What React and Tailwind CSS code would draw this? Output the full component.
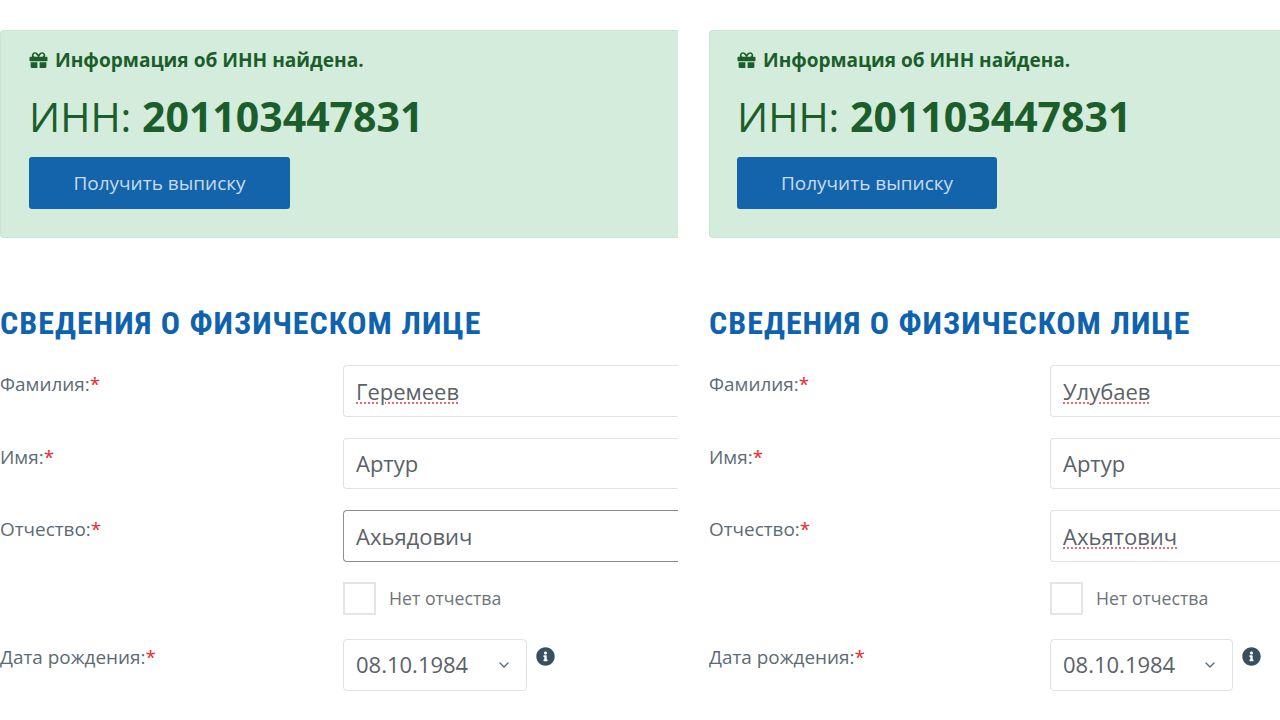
import React from "react";
import { FaGift, FaInfoCircle } from "react-icons/fa";
import { ChevronDown } from "lucide-react";

function Field({ label, value, wavy, focused, col }) {
  return (
    <div className="flex h-[51.5px] items-start">
      <div className={`${col} shrink-0 pt-[9px] text-[18.9px] leading-[20px] text-[#5b6b75]`}>
        {label}:<span className="text-[#f0262c]">*</span>
      </div>
      <div className={`flex h-[51.5px] grow items-center rounded-[4px] rounded-r-none border border-r-0 px-[12px] pt-[1px] text-[22px] text-[#5a6268] ${focused ? "border-[#8a8f92]" : "border-[#dde3e8]"}`}>
        <span className={wavy ? "underline decoration-[#f0686c] decoration-dotted decoration-2 underline-offset-[3px]" : ""}>{value}</span>
      </div>
    </div>
  );
}

function Panel({ width, surname, patronymic, wavyP, focused, col, btn, dateW, pad, title }) {
  return (
    <section className={`${width} shrink-0 overflow-hidden`}>
      <div className={`h-[208px] rounded-l-[4px] border border-r-0 border-[#c9e6d2] bg-[#d4ecdb] ${pad} pt-[17px] text-[#1b5e2b]`}>
        <div className={`flex h-[24px] items-center gap-[7px] ${title} font-bold leading-[24px]`}>
          <FaGift className="h-[18px] w-[19px]" />
          <span>Информация об ИНН найдена.</span>
        </div>
        <div className="mt-[15px] h-[58px] text-[41px] leading-[58px]">
          ИНН: <b>201103447831</b>
        </div>
        <button className={`${btn} mt-[12px] block h-[52px] rounded-[3px] bg-[#1464ab] text-[19px] text-[#c9dcef]`}>
          Получить выписку
        </button>
      </div>
      <h2 className="mt-[62px] h-[46px] text-[32px] font-bold leading-[46px] tracking-[1px] text-[#0f62ad] [font-family:'Liberation_Sans_Narrow','Roboto_Condensed',Roboto,sans-serif]">
        СВЕДЕНИЯ О ФИЗИЧЕСКОМ ЛИЦЕ
      </h2>
      <div className="mt-[19px] flex flex-col gap-[21px]">
        <Field label="Фамилия" value={surname} wavy col={col} />
        <Field label="Имя" value="Артур" col={col} />
        <Field label="Отчество" value={patronymic} wavy={wavyP} focused={focused} col={col} />
      </div>
      <div className="mt-[20px] flex h-[33px] items-center">
        <div className={`${col} shrink-0`} />
        <div className="h-[33px] w-[33px] border-2 border-[#e3e5e6] bg-white" />
        <span className="ml-[13px] text-[17.7px] text-[#6d7478]">Нет отчества</span>
      </div>
      <div className="mt-[24px] flex h-[52px] items-start">
        <div className={`${col} shrink-0 pt-[8px] text-[18.9px] leading-[20px] text-[#5b6b75]`}>
          Дата рождения:<span className="text-[#f0262c]">*</span>
        </div>
        <div className={`flex h-[52px] ${dateW} items-center justify-between rounded-[4px] border border-[#dde3e8] pl-[12px] pr-[14px] text-[22px] text-[#5a6268]`}>
          <span>08.10.1984</span>
          <ChevronDown className="h-[16px] w-[16px] text-[#5b6b75]" strokeWidth={2} />
        </div>
        <FaInfoCircle className="ml-[9px] mt-[8px] h-[19px] w-[19px] text-[#36505f]" />
      </div>
    </section>
  );
}

export default function App() {
  return (
    <div className="flex h-[720px] w-[1280px] gap-[31px] overflow-hidden bg-white pt-[30px] [font-family:'Open_Sans',sans-serif]">
      <Panel width="w-[678px]" surname="Геремеев" patronymic="Ахьядович" focused col="w-[343px]" btn="w-[261px]" dateW="w-[184px]" pad="pl-[28px]" title="text-[19.1px]" />
      <Panel width="w-[571px]" surname="Улубаев" patronymic="Ахьятович" wavyP col="w-[341px]" btn="w-[260px]" dateW="w-[183px]" pad="pl-[27px]" title="text-[19px]" />
    </div>
  );
}
